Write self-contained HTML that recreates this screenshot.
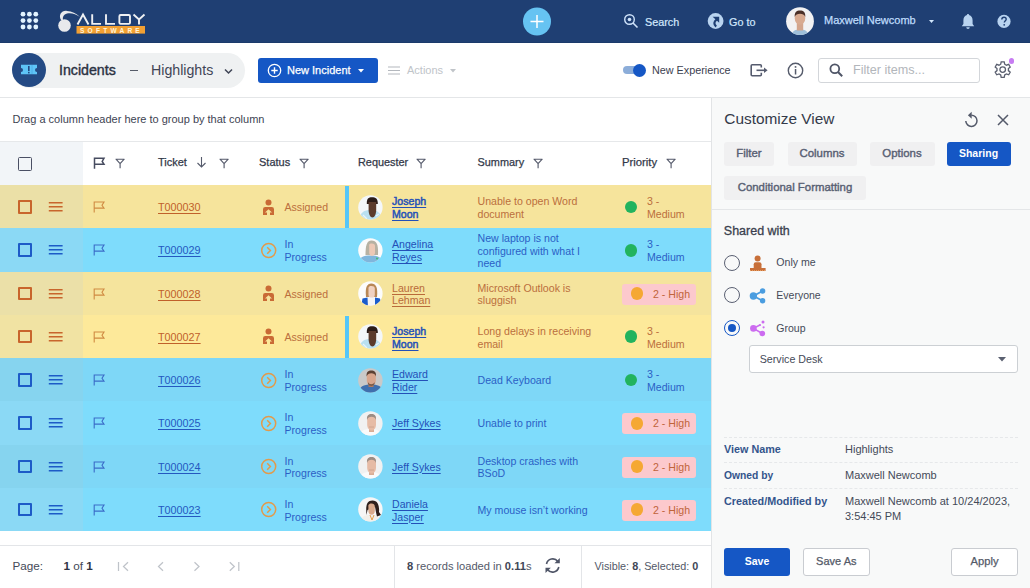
<!DOCTYPE html>
<html><head><meta charset="utf-8">
<style>
*{box-sizing:border-box;margin:0;padding:0}
html,body{width:1030px;height:588px;overflow:hidden;background:#fff;font-family:"Liberation Sans",sans-serif;color:#3a3f4e}
.a{position:absolute;white-space:nowrap}
svg{position:absolute;overflow:visible}
#hdr{z-index:2;position:absolute;left:0;top:0;width:1030px;height:43px;background:#1f3f73;border-bottom:1px solid #1b3a6b}
.ht{color:#d3e8fd;font-size:10.8px;line-height:14px;-webkit-text-stroke:0.2px #d3e8fd}
#tb{position:absolute;left:0;top:42px;width:1030px;height:56px;background:#fff;border-bottom:1px solid #e4e6e8}
#grid{position:absolute;left:0;top:98px;width:711px;height:490px;background:#fff}
.row{position:absolute;left:0;width:711px}
.lc{position:absolute;left:0;top:0;width:83px;height:100%}
.t{font-size:11px;line-height:13px}
.u{text-decoration:underline;text-decoration-thickness:1px;text-underline-offset:1.5px}
#panel{position:absolute;left:711px;top:98px;width:319px;height:490px;background:#f8f9f9;border-left:1px solid #e2e4e6}
.tab{position:absolute;height:24px;background:#f0f0f1;border-radius:3px;color:#586073;font-size:11.4px;line-height:22px;text-align:center;-webkit-text-stroke:0.4px #586073}
.lbl{color:#34558c;font-size:10.8px;font-weight:700;line-height:13px}
.val{color:#444a58;font-size:11px;line-height:13px}
.btn{position:absolute;height:28px;border-radius:3px;font-size:11.5px;line-height:24px;text-align:center}
</style></head><body>

<!-- HEADER -->
<div id="hdr">
  <svg width="40" height="40" style="left:0;top:0">
    <g fill="#e2f4ff">
      <circle cx="23" cy="14.2" r="2.4"/><circle cx="29.4" cy="14.2" r="2.4"/><circle cx="35.8" cy="14.2" r="2.4"/>
      <circle cx="23" cy="20.6" r="2.4"/><circle cx="29.4" cy="20.6" r="2.4"/><circle cx="35.8" cy="20.6" r="2.4"/>
      <circle cx="23" cy="27" r="2.4"/><circle cx="29.4" cy="27" r="2.4"/><circle cx="35.8" cy="27" r="2.4"/>
    </g>
  </svg>
  <!-- logo -->
  <svg width="100" height="40" style="left:50px;top:0">
    <circle cx="14.5" cy="25.5" r="6.3" fill="#e8e9ec"/>
    <path d="M11 20 C8 15 12 10 17 11 C22 11.5 26 13 30 17 C26 14 21 12.5 17 13.5 C13.5 14.5 12.5 17 13 20 Z" fill="#e8e9ec"/>
    <g fill="none" stroke="#eef0f3" stroke-width="1.9">
      <path d="M27.5 24.5 L33 14.5 L38.5 24.5"/>
      <path d="M42.2 14.3 V23.9 H51"/>
      <path d="M56 14.3 V23.9 H65"/>
      <rect x="69.4" y="15" width="10.6" height="8.9" rx="1.2"/>
      <path d="M83.5 14.5 L89 19.5 L94.5 14.5 M89 19.5 V24.5"/>
    </g>
    <rect x="26.5" y="26" width="68.5" height="7.6" fill="#f2a033"/>
    <text x="30" y="32.6" font-family="Liberation Sans" font-size="6.6" font-weight="700" fill="#fff3d8" letter-spacing="3.2">SOFTWARE</text>
  </svg>
  <svg width="30" height="30" style="left:522px;top:7px">
    <circle cx="15" cy="14.5" r="14" fill="#66c3f2"/>
    <path d="M8.5 14.5 H21.5 M15 8 V21" stroke="#fff" stroke-width="1.5"/>
  </svg>
  <svg width="16" height="16" style="left:623px;top:13px">
    <circle cx="6.5" cy="6.5" r="4.8" fill="none" stroke="#cfe3fb" stroke-width="1.4"/>
    <circle cx="6.5" cy="6.5" r="1.8" fill="#cfe3fb"/>
    <path d="M10 10 L14.5 14.5" stroke="#cfe3fb" stroke-width="1.6"/>
  </svg>
  <div class="a ht" style="left:645px;top:15px">Search</div>
  <svg width="18" height="18" style="left:707px;top:12px">
    <circle cx="8.6" cy="9" r="7.9" fill="#b9d4f0"/>
    <path d="M5.6 4.8 H12.2 V10.8 Z" fill="#1f3f73"/>
    <path d="M9.6 7.6 C6.8 9.6 6.6 12.4 9.2 14.6" fill="none" stroke="#1f3f73" stroke-width="2.2"/>
  </svg>
  <div class="a ht" style="left:729px;top:15px">Go to</div>
  <!-- avatar -->
  <svg width="30" height="30" style="left:785px;top:7px">
    <defs><clipPath id="avc"><circle cx="15" cy="14.2" r="13.9"/></clipPath></defs>
    <circle cx="15" cy="14.2" r="13.9" fill="#f2f2f3"/>
    <g clip-path="url(#avc)">
      <path d="M6 30 C7 24 10 22.5 15 22.5 C20 22.5 23 24 24 30 Z" fill="#9fbfd9"/>
      <rect x="11.8" y="15" width="6.4" height="8.5" fill="#d3a58c"/>
      <ellipse cx="15" cy="11" rx="5.3" ry="6.8" fill="#d8aa90"/>
      <path d="M9.7 10 C9.4 5 11.5 3.5 15 3.5 C18.5 3.5 20.6 5 20.3 10 C19.5 7.5 17.5 6.8 15 6.8 C12.5 6.8 10.5 7.5 9.7 10 Z" fill="#4a3028"/>
    </g>
  </svg>
  <div class="a ht" style="left:824px;top:12.5px;font-size:11px;color:#bfdcfb;-webkit-text-stroke:0.25px #bfdcfb">Maxwell Newcomb</div>
  <svg width="8" height="6" style="left:928.5px;top:20px"><path d="M0 0 H5 L2.5 3 Z" fill="#d3e8fd"/></svg>
  <svg width="16" height="18" style="left:960px;top:13px">
    <path d="M8 1 C8.8 1 9 1.5 9 2 C11.5 2.6 12.6 4.6 12.6 7.5 V11 L14.2 13.2 H1.8 L3.4 11 V7.5 C3.4 4.6 4.5 2.6 7 2 C7 1.5 7.2 1 8 1 Z" fill="#b8d3f0"/>
    <path d="M6.3 14.2 H9.7 C9.7 15.2 9 15.9 8 15.9 C7 15.9 6.3 15.2 6.3 14.2 Z" fill="#b8d3f0"/>
  </svg>
  <svg width="16" height="16" style="left:996px;top:13px">
    <circle cx="8" cy="8.4" r="6.6" fill="#b8d3f0"/>
    <path d="M5.8 6.4 C5.8 4.9 6.8 4.2 8 4.2 C9.3 4.2 10.2 5 10.2 6.2 C10.2 7.6 8.3 7.9 8.3 9.6" fill="none" stroke="#1f3e72" stroke-width="1.4"/>
    <circle cx="8.2" cy="11.8" r="0.9" fill="#1f3e72"/>
  </svg>
</div>

<!-- TOOLBAR -->
<div id="tb">
  <div class="a" style="left:12px;top:11px;width:233px;height:35px;border-radius:18px;background:#eff1f2"></div>
  <svg width="36" height="36" style="left:12px;top:11px">
    <circle cx="17" cy="17" r="17" fill="#244a84"/>
    <path d="M9 11.8 H25 V15 A2 2 0 0 0 25 19 V21.3 H9 V19 A2 2 0 0 0 9 15 Z" fill="#5ec4f7"/>
    <rect x="16" y="13" width="1.6" height="5.2" fill="#244a84"/>
    <rect x="16" y="19" width="1.6" height="1.4" fill="#244a84"/>
    <path d="M20 12.5 V21" stroke="#3b8fd0" stroke-width="0.8" stroke-dasharray="1 1"/>
  </svg>
  <div class="a" style="left:59px;top:20px;font-size:14.2px;line-height:16px;color:#2b3142;-webkit-text-stroke:0.4px #2b3142">Incidents</div>
  <div class="a" style="left:130px;top:27.5px;width:8px;height:1.3px;background:#555b68"></div>
  <div class="a" style="left:151px;top:20px;font-size:14.2px;line-height:16px;color:#3f4556">Highlights</div>
  <svg width="10" height="8" style="left:224px;top:26px"><path d="M1 1.5 L4.5 5 L8 1.5" fill="none" stroke="#3f4556" stroke-width="1.5"/></svg>

  <div class="a" style="left:257.5px;top:15.5px;width:120px;height:25px;border-radius:3px;background:#1557c5"></div>
  <svg width="16" height="16" style="left:267px;top:20.5px">
    <circle cx="7.5" cy="7.5" r="6.2" fill="none" stroke="#fff" stroke-width="1.3"/>
    <path d="M4.3 7.5 H10.7 M7.5 4.3 V10.7" stroke="#fff" stroke-width="1.4"/>
  </svg>
  <div class="a" style="left:287px;top:21.5px;font-size:11px;line-height:13px;color:#fff;-webkit-text-stroke:0.25px #fff">New Incident</div>
  <svg width="8" height="6" style="left:357.5px;top:26.5px"><path d="M0 0 H6 L3 3.5 Z" fill="#fff"/></svg>

  <svg width="14" height="10" style="left:387.5px;top:23.5px">
    <path d="M0 1 H12 M0 4.5 H12 M0 8 H12" stroke="#b4b8be" stroke-width="1.1"/>
  </svg>
  <div class="a" style="left:407px;top:21.5px;font-size:11px;line-height:13px;color:#c0c4c9">Actions</div>
  <svg width="8" height="6" style="left:449.5px;top:26.5px"><path d="M0 0 H6 L3 3.5 Z" fill="#c0c4c9"/></svg>

  <!-- toggle -->
  <div class="a" style="left:623px;top:24px;width:21px;height:8px;border-radius:4px;background:#8cadd9"></div>
  <div class="a" style="left:633px;top:22px;width:13px;height:13px;border-radius:50%;background:#1557c5"></div>
  <div class="a" style="left:652px;top:21.5px;font-size:10.8px;line-height:13px;color:#3c4150">New Experience</div>
  <svg width="20" height="16" style="left:749px;top:21px">
    <path d="M12.3 4.6 V2.8 Q12.3 1.8 11.3 1.8 H3.2 Q2.2 1.8 2.2 2.8 V11.8 Q2.2 12.8 3.2 12.8 H11.3 Q12.3 12.8 12.3 11.8 V9.8" fill="none" stroke="#555b6e" stroke-width="1.6"/>
    <path d="M7.5 7.3 H15.5" stroke="#555b6e" stroke-width="1.6"/><path d="M15 4.5 L18.6 7.3 L15 10.1 Z" fill="#555b6e"/>
  </svg>
  <svg width="18" height="18" style="left:787px;top:19.5px">
    <circle cx="8.5" cy="8.5" r="7.2" fill="none" stroke="#555b6b" stroke-width="1.4"/>
    <rect x="7.8" y="7" width="1.5" height="5.5" fill="#555b6b"/>
    <circle cx="8.55" cy="4.9" r="0.95" fill="#555b6b"/>
  </svg>
  <div class="a" style="left:818px;top:16px;width:162px;height:24.5px;border:1px solid #d3d6da;border-radius:3px;background:#fff"></div>
  <svg width="16" height="16" style="left:829px;top:21px">
    <circle cx="5.8" cy="5.8" r="4.4" fill="none" stroke="#4f5567" stroke-width="1.8"/>
    <path d="M9 9 L13.2 13.2" stroke="#4f5567" stroke-width="2"/>
  </svg>
  <div class="a" style="left:853px;top:20.5px;font-size:12.6px;line-height:15px;color:#b2b6bb">Filter items...</div>
  <svg width="20" height="20" style="left:993px;top:18px">
    <path fill="none" stroke="#5b6070" stroke-width="1.3" d="M8.2 1.8 H11.2 L11.7 4.2 L13.4 5.2 L15.7 4.4 L17.2 7 L15.4 8.6 V10.6 L17.2 12.2 L15.7 14.8 L13.4 14 L11.7 15 L11.2 17.4 H8.2 L7.7 15 L6 14 L3.7 14.8 L2.2 12.2 L4 10.6 V8.6 L2.2 7 L3.7 4.4 L6 5.2 L7.7 4.2 Z"/>
    <circle cx="9.7" cy="9.6" r="2.8" fill="none" stroke="#5b6070" stroke-width="1.3"/>
  </svg>
  <div class="a" style="left:1008.5px;top:16px;width:5.5px;height:5.5px;border-radius:3px;background:#c77cf2"></div>
</div>

<!-- GRID -->
<div id="grid">
  <div class="a t" style="left:12.5px;top:15px;font-size:11px;color:#3d4352">Drag a column header here to group by that column</div>
  <div class="a" style="left:0;top:43px;width:711px;height:1px;background:#e6e8ea"></div>
  <!-- header row -->
  <div class="a" style="left:0;top:44px;width:83px;height:43px;background:#f2f5f8"></div>
  <div class="a" style="left:18px;top:59px;width:14px;height:13.5px;border:1.8px solid #4a4f64;border-radius:1.5px"></div>
  <svg width="14" height="14" style="left:93px;top:59px">
    <path d="M1.5 11.8 V1.2 H11 L9.2 4.4 L11 7.3 H1.5" fill="none" stroke="#474c60" stroke-width="1.5"/>
  </svg>
  <svg id="fi" width="12" height="12" style="left:115px;top:60px">
    <path d="M1 1.2 H9.2 L5.1 5.6 Z M5.1 5.6 V10.2" fill="none" stroke="#555a6b" stroke-width="1.15" stroke-linejoin="round"/>
  </svg>
  <div class="a" style="left:158px;top:57px;font-size:11px;line-height:14px;color:#333949;-webkit-text-stroke:0.25px #333949">Ticket</div>
  <svg width="12" height="14" style="left:196px;top:58px">
    <path d="M5.5 1 V11 M1.5 7 L5.5 11 L9.5 7" fill="none" stroke="#555a6b" stroke-width="1.1"/>
  </svg>
  <svg width="12" height="12" style="left:219px;top:60px"><path d="M1 1.2 H9.2 L5.1 5.6 Z M5.1 5.6 V10.2" fill="none" stroke="#555a6b" stroke-width="1.15" stroke-linejoin="round"/></svg>
  <div class="a" style="left:259px;top:57px;font-size:11px;line-height:14px;color:#333949;-webkit-text-stroke:0.25px #333949">Status</div>
  <svg width="12" height="12" style="left:299px;top:60px"><path d="M1 1.2 H9.2 L5.1 5.6 Z M5.1 5.6 V10.2" fill="none" stroke="#555a6b" stroke-width="1.15" stroke-linejoin="round"/></svg>
  <div class="a" style="left:358px;top:57px;font-size:10.9px;line-height:14px;color:#333949;-webkit-text-stroke:0.25px #333949">Requester</div>
  <svg width="12" height="12" style="left:416px;top:60px"><path d="M1 1.2 H9.2 L5.1 5.6 Z M5.1 5.6 V10.2" fill="none" stroke="#555a6b" stroke-width="1.15" stroke-linejoin="round"/></svg>
  <div class="a" style="left:477.5px;top:57px;font-size:10.9px;line-height:14px;color:#333949;-webkit-text-stroke:0.25px #333949">Summary</div>
  <svg width="12" height="12" style="left:533px;top:60px"><path d="M1 1.2 H9.2 L5.1 5.6 Z M5.1 5.6 V10.2" fill="none" stroke="#555a6b" stroke-width="1.15" stroke-linejoin="round"/></svg>
  <div class="a" style="left:622px;top:57px;font-size:11.3px;line-height:14px;color:#333949;-webkit-text-stroke:0.25px #333949">Priority</div>
  <svg width="12" height="12" style="left:666px;top:60px"><path d="M1 1.2 H9.2 L5.1 5.6 Z M5.1 5.6 V10.2" fill="none" stroke="#555a6b" stroke-width="1.15" stroke-linejoin="round"/></svg>

  <div class="row" style="top:87.0px;height:43.25px;background:#f6e49c">
<div class="lc" style="background:#ebe0a7"></div>
<div class="a" style="left:18px;top:15px;width:14px;height:13.5px;border:2px solid #c8652c;border-radius:1px"></div>
<svg width="16" height="12" style="left:48px;top:16px"><path d="M0.8 1.8 H14.6 M0.8 5.8 H14.6 M0.8 9.7 H14.6" stroke="#c8652c" stroke-width="1.5"/></svg>
<svg width="14" height="14" style="left:93px;top:16px"><path d="M1.2 11.5 V1 H11 L9 4.2 L11 7.1 H1.2" fill="none" stroke="#d08a42" stroke-width="1.1"/></svg>
<div class="a t u" style="left:158px;top:16px;font-size:10.8px;color:#c0602a">T000030</div>
<svg width="14" height="18" style="left:262px;top:13.5px"><circle cx="6.5" cy="3.5" r="3" fill="#c96a35"/><path d="M1 16 V10.2 Q1 8 3.2 8 H9.8 Q12 8 12 10.2 V16 H8 V13.6 H10 L6.5 10.2 L3 13.6 H5 V16 Z" fill="#c96a35"/></svg>
<div class="a t" style="left:284.5px;top:16px;font-size:10.6px;color:#bb6f3d">Assigned</div>
<div class="a" style="left:345px;top:1px;width:4px;height:41.75px;background:#55c6f8"></div>
<svg width="26" height="26" style="left:357.8px;top:9.6px"><defs><clipPath id="cp0"><circle cx="12.4" cy="12.4" r="12.2"/></clipPath></defs><g clip-path="url(#cp0)"><rect width="26" height="26" fill="#f4f7f9"/><path d="M1 26 C2 17 6 15 12.5 15 C19 15 23 17 24 26 Z" fill="#b9e0f0"/><path d="M8.8 9 C8.5 3.5 10.5 2.2 14 2.2 C17.5 2.2 20 3.5 19.8 9 Z" fill="#2b1c18"/><path d="M10.6 7 H18.2 V15 C18.2 19 16.5 22.5 14.4 22.5 C12.3 22.5 10.6 19 10.6 15 Z" fill="#5b3b2c"/><path d="M5 20 L9 24 M18 21 L21 19" stroke="#e8f4fa" stroke-width="1.2"/></g></svg>
<div class="a t u" style="left:392px;top:10.2px;font-size:10.6px;line-height:12.6px;-webkit-text-stroke:0.45px #2350b8;color:#2350b8">Joseph<br>Moon</div>
<div class="a t" style="left:477.5px;top:10.2px;font-size:10.6px;line-height:12.6px;color:#bb6f3d">Unable to open Word<br>document</div>
<div class="a" style="left:624.7px;top:15.7px;width:12.6px;height:12.6px;border-radius:50%;background:#22b35e"></div>
<div class="a t" style="left:647px;top:10.2px;font-size:10.6px;line-height:12.6px;color:#bb6f3d">3 -<br>Medium</div>
</div>
<div class="row" style="top:130.25px;height:43.25px;background:#7edcfc">
<div class="lc" style="background:#8bd9f5"></div>
<div class="a" style="left:18px;top:15px;width:14px;height:13.5px;border:2px solid #1d5bc7;border-radius:1px"></div>
<svg width="16" height="12" style="left:48px;top:16px"><path d="M0.8 1.8 H14.6 M0.8 5.8 H14.6 M0.8 9.7 H14.6" stroke="#1d5bc7" stroke-width="1.5"/></svg>
<svg width="14" height="14" style="left:93px;top:16px"><path d="M1.2 11.5 V1 H11 L9 4.2 L11 7.1 H1.2" fill="none" stroke="#3b6cc8" stroke-width="1.1"/></svg>
<div class="a t u" style="left:158px;top:16px;font-size:10.8px;color:#2458c0">T000029</div>
<svg width="18" height="18" style="left:260px;top:13.5px"><circle cx="8.7" cy="8.5" r="7" fill="none" stroke="#e39a4a" stroke-width="1.5"/><path d="M7.2 5.2 L10.4 8.5 L7.2 11.8" fill="none" stroke="#e39a4a" stroke-width="1.5"/></svg>
<div class="a t" style="left:284.5px;top:10.2px;font-size:10.6px;line-height:12.6px;color:#2b5fc6">In<br>Progress</div>
<svg width="26" height="26" style="left:357.8px;top:9.6px"><defs><clipPath id="cp1"><circle cx="12.4" cy="12.4" r="12.2"/></clipPath></defs><g clip-path="url(#cp1)"><rect width="26" height="26" fill="#fbfbfb"/><path d="M0 26 C1 19 5 17.5 12.5 17.5 C20 17.5 24 19 25 26 Z" fill="#7fb6dc"/><circle cx="19" cy="20.5" r="1" fill="#3fbf6f"/><circle cx="21" cy="23" r="1" fill="#3fbf6f"/><path d="M7.5 17 C7.5 8 8.5 2.5 13.5 2.5 C18.5 2.5 20.5 6 20 17 Z" fill="#b7b1a2"/><path d="M11.2 7 C11.2 6 12 5.5 13.8 5.5 C16 5.5 17 6.5 17 8 V14.5 C17 16.8 15.6 18 14 18 C12.4 18 11.2 16.8 11.2 14.5 Z" fill="#edc9b6"/></g></svg>
<div class="a t u" style="left:392px;top:10.2px;font-size:10.6px;line-height:12.6px;color:#2350b8">Angelina<br>Reyes</div>
<div class="a t" style="left:477.5px;top:3.9px;font-size:10.6px;line-height:12.6px;color:#2b5fc6">New laptop is not<br>configured with what I<br>need</div>
<div class="a" style="left:624.7px;top:15.7px;width:12.6px;height:12.6px;border-radius:50%;background:#22b35e"></div>
<div class="a t" style="left:647px;top:10.2px;font-size:10.6px;line-height:12.6px;color:#2b5fc6">3 -<br>Medium</div>
</div>
<div class="row" style="top:173.5px;height:43.25px;background:#f5e49d">
<div class="lc" style="background:#ebe0a8"></div>
<div class="a" style="left:18px;top:15px;width:14px;height:13.5px;border:2px solid #c8652c;border-radius:1px"></div>
<svg width="16" height="12" style="left:48px;top:16px"><path d="M0.8 1.8 H14.6 M0.8 5.8 H14.6 M0.8 9.7 H14.6" stroke="#c8652c" stroke-width="1.5"/></svg>
<svg width="14" height="14" style="left:93px;top:16px"><path d="M1.2 11.5 V1 H11 L9 4.2 L11 7.1 H1.2" fill="none" stroke="#d08a42" stroke-width="1.1"/></svg>
<div class="a t u" style="left:158px;top:16px;font-size:10.8px;color:#c0602a">T000028</div>
<svg width="14" height="18" style="left:262px;top:13.5px"><circle cx="6.5" cy="3.5" r="3" fill="#c96a35"/><path d="M1 16 V10.2 Q1 8 3.2 8 H9.8 Q12 8 12 10.2 V16 H8 V13.6 H10 L6.5 10.2 L3 13.6 H5 V16 Z" fill="#c96a35"/></svg>
<div class="a t" style="left:284.5px;top:16px;font-size:10.6px;color:#bb6f3d">Assigned</div>
<svg width="26" height="26" style="left:357.8px;top:9.6px"><defs><clipPath id="cp2"><circle cx="12.4" cy="12.4" r="12.2"/></clipPath></defs><g clip-path="url(#cp2)"><rect width="26" height="26" fill="#fcfcfc"/><path d="M8 16 C7 6 9 2.5 13.3 2.5 C17.8 2.5 20 6 19 16 Z" fill="#b98856"/><path d="M10.5 7 C10.5 5.5 11.8 5 13.5 5 C15.5 5 16.8 5.8 16.8 7.5 V13.5 C16.8 16 15.3 17.3 13.6 17.3 C11.9 17.3 10.5 16 10.5 13.5 Z" fill="#f1d2c2"/><path d="M4 26 C4 19 7 16.5 13 16.5 C19 16.5 22 19 22.5 26 Z" fill="#f4f4f6"/><path d="M3 26 L4.5 17.5 L9.5 16.5 L10 26 Z M17 16.5 L22 17.5 L24 26 H17 Z" fill="#1a5ccc"/></g></svg>
<div class="a t u" style="left:392px;top:10.2px;font-size:10.6px;line-height:12.6px;color:#b96a3a">Lauren<br>Lehman</div>
<div class="a t" style="left:477.5px;top:10.2px;font-size:10.6px;line-height:12.6px;color:#bb6f3d">Microsoft Outlook is<br>sluggish</div>
<div class="a" style="left:622px;top:12px;width:74px;height:21px;border-radius:3px;background:#fcc9cd"></div>
<div class="a" style="left:630.7px;top:15.7px;width:12.6px;height:12.6px;border-radius:50%;background:#f5a833"></div>
<div class="a t" style="left:653px;top:16px;font-size:10.6px;color:#c0643a">2 - High</div>
</div>
<div class="row" style="top:216.75px;height:43.25px;background:#fde99a">
<div class="lc" style="background:#f1e3a3"></div>
<div class="a" style="left:18px;top:15px;width:14px;height:13.5px;border:2px solid #c8652c;border-radius:1px"></div>
<svg width="16" height="12" style="left:48px;top:16px"><path d="M0.8 1.8 H14.6 M0.8 5.8 H14.6 M0.8 9.7 H14.6" stroke="#c8652c" stroke-width="1.5"/></svg>
<svg width="14" height="14" style="left:93px;top:16px"><path d="M1.2 11.5 V1 H11 L9 4.2 L11 7.1 H1.2" fill="none" stroke="#d08a42" stroke-width="1.1"/></svg>
<div class="a t u" style="left:158px;top:16px;font-size:10.8px;color:#c0602a">T000027</div>
<svg width="14" height="18" style="left:262px;top:13.5px"><circle cx="6.5" cy="3.5" r="3" fill="#c96a35"/><path d="M1 16 V10.2 Q1 8 3.2 8 H9.8 Q12 8 12 10.2 V16 H8 V13.6 H10 L6.5 10.2 L3 13.6 H5 V16 Z" fill="#c96a35"/></svg>
<div class="a t" style="left:284.5px;top:16px;font-size:10.6px;color:#bb6f3d">Assigned</div>
<div class="a" style="left:345px;top:1px;width:4px;height:41.75px;background:#55c6f8"></div>
<svg width="26" height="26" style="left:357.8px;top:9.6px"><defs><clipPath id="cp3"><circle cx="12.4" cy="12.4" r="12.2"/></clipPath></defs><g clip-path="url(#cp3)"><rect width="26" height="26" fill="#f4f7f9"/><path d="M1 26 C2 17 6 15 12.5 15 C19 15 23 17 24 26 Z" fill="#b9e0f0"/><path d="M8.8 9 C8.5 3.5 10.5 2.2 14 2.2 C17.5 2.2 20 3.5 19.8 9 Z" fill="#2b1c18"/><path d="M10.6 7 H18.2 V15 C18.2 19 16.5 22.5 14.4 22.5 C12.3 22.5 10.6 19 10.6 15 Z" fill="#5b3b2c"/><path d="M5 20 L9 24 M18 21 L21 19" stroke="#e8f4fa" stroke-width="1.2"/></g></svg>
<div class="a t u" style="left:392px;top:10.2px;font-size:10.6px;line-height:12.6px;-webkit-text-stroke:0.45px #2350b8;color:#2350b8">Joseph<br>Moon</div>
<div class="a t" style="left:477.5px;top:10.2px;font-size:10.6px;line-height:12.6px;color:#bb6f3d">Long delays in receiving<br>email</div>
<div class="a" style="left:624.7px;top:15.7px;width:12.6px;height:12.6px;border-radius:50%;background:#22b35e"></div>
<div class="a t" style="left:647px;top:10.2px;font-size:10.6px;line-height:12.6px;color:#bb6f3d">3 -<br>Medium</div>
</div>
<div class="row" style="top:260.0px;height:43.25px;background:#7ed7f7">
<div class="lc" style="background:#86d4ef"></div>
<div class="a" style="left:18px;top:15px;width:14px;height:13.5px;border:2px solid #1d5bc7;border-radius:1px"></div>
<svg width="16" height="12" style="left:48px;top:16px"><path d="M0.8 1.8 H14.6 M0.8 5.8 H14.6 M0.8 9.7 H14.6" stroke="#1d5bc7" stroke-width="1.5"/></svg>
<svg width="14" height="14" style="left:93px;top:16px"><path d="M1.2 11.5 V1 H11 L9 4.2 L11 7.1 H1.2" fill="none" stroke="#3b6cc8" stroke-width="1.1"/></svg>
<div class="a t u" style="left:158px;top:16px;font-size:10.8px;color:#2458c0">T000026</div>
<svg width="18" height="18" style="left:260px;top:13.5px"><circle cx="8.7" cy="8.5" r="7" fill="none" stroke="#e39a4a" stroke-width="1.5"/><path d="M7.2 5.2 L10.4 8.5 L7.2 11.8" fill="none" stroke="#e39a4a" stroke-width="1.5"/></svg>
<div class="a t" style="left:284.5px;top:10.2px;font-size:10.6px;line-height:12.6px;color:#2b5fc6">In<br>Progress</div>
<svg width="26" height="26" style="left:357.8px;top:9.6px"><defs><clipPath id="cp4"><circle cx="12.4" cy="12.4" r="12.2"/></clipPath></defs><g clip-path="url(#cp4)"><rect width="26" height="26" fill="#c9c9c9"/><path d="M0 26 C1 18.5 5 16.5 13 16.5 C21 16.5 25 18.5 26 26 Z" fill="#3f6fae"/><path d="M10.5 13 H15.5 V19 H10.5 Z" fill="#b07a60"/><path d="M8.8 7 C8.8 4 10.5 3 13.3 3 C16 3 17.8 4 17.8 7 V12.5 C17.8 15.5 15.8 17.5 13.3 17.5 C10.8 17.5 8.8 15.5 8.8 12.5 Z" fill="#d8a58c"/><path d="M8.6 8.5 C8.3 3.8 10.2 2.5 13.3 2.5 C16.4 2.5 18.3 3.8 18 8.5 C17.2 6 15.5 5.2 13.3 5.2 C11.1 5.2 9.4 6 8.6 8.5 Z" fill="#5a4033"/><path d="M10 14 C11 17 15.5 17 16.5 14 V16 C15.5 18.5 11 18.5 10 16 Z" fill="#7a5a48"/></g></svg>
<div class="a t u" style="left:392px;top:10.2px;font-size:10.6px;line-height:12.6px;color:#2350b8">Edward<br>Rider</div>
<div class="a t" style="left:477.5px;top:16px;font-size:10.6px;line-height:12.6px;color:#2b5fc6">Dead Keyboard</div>
<div class="a" style="left:624.7px;top:15.7px;width:12.6px;height:12.6px;border-radius:50%;background:#22b35e"></div>
<div class="a t" style="left:647px;top:10.2px;font-size:10.6px;line-height:12.6px;color:#2b5fc6">3 -<br>Medium</div>
</div>
<div class="row" style="top:303.25px;height:43.25px;background:#7edcfc">
<div class="lc" style="background:#8bd9f5"></div>
<div class="a" style="left:18px;top:15px;width:14px;height:13.5px;border:2px solid #1d5bc7;border-radius:1px"></div>
<svg width="16" height="12" style="left:48px;top:16px"><path d="M0.8 1.8 H14.6 M0.8 5.8 H14.6 M0.8 9.7 H14.6" stroke="#1d5bc7" stroke-width="1.5"/></svg>
<svg width="14" height="14" style="left:93px;top:16px"><path d="M1.2 11.5 V1 H11 L9 4.2 L11 7.1 H1.2" fill="none" stroke="#3b6cc8" stroke-width="1.1"/></svg>
<div class="a t u" style="left:158px;top:16px;font-size:10.8px;color:#2458c0">T000025</div>
<svg width="18" height="18" style="left:260px;top:13.5px"><circle cx="8.7" cy="8.5" r="7" fill="none" stroke="#e39a4a" stroke-width="1.5"/><path d="M7.2 5.2 L10.4 8.5 L7.2 11.8" fill="none" stroke="#e39a4a" stroke-width="1.5"/></svg>
<div class="a t" style="left:284.5px;top:10.2px;font-size:10.6px;line-height:12.6px;color:#2b5fc6">In<br>Progress</div>
<svg width="26" height="26" style="left:357.8px;top:9.6px"><defs><clipPath id="cp5"><circle cx="12.4" cy="12.4" r="12.2"/></clipPath></defs><g clip-path="url(#cp5)"><rect width="26" height="26" fill="#f1f1f1"/><path d="M1 26 C2 19.5 6 18 12.5 18 C19 18 23 19.5 24 26 Z" fill="#fafafa"/><path d="M11 14 H16 V21 H11 Z" fill="#d9ad95"/><path d="M9.2 7.5 C9.2 4.5 11 3.5 13.5 3.5 C16 3.5 18 4.5 18 7.5 V13.5 C18 17 16 19.5 13.6 19.5 C11.2 19.5 9.2 17 9.2 13.5 Z" fill="#e6bba5"/><path d="M9 9 C8.7 4.2 10.6 3 13.5 3 C16.4 3 18.3 4.2 18 9 C17.3 6.5 15.8 5.8 13.5 5.8 C11.2 5.8 9.7 6.5 9 9 Z" fill="#9b8c84"/><path d="M11 16 H16" stroke="#c9a08a" stroke-width="0.8"/></g></svg>
<div class="a t u" style="left:392px;top:16px;font-size:10.6px;color:#2350b8">Jeff Sykes</div>
<div class="a t" style="left:477.5px;top:16px;font-size:10.6px;line-height:12.6px;color:#2b5fc6">Unable to print</div>
<div class="a" style="left:622px;top:12px;width:74px;height:21px;border-radius:3px;background:#fcc9cd"></div>
<div class="a" style="left:630.7px;top:15.7px;width:12.6px;height:12.6px;border-radius:50%;background:#f5a833"></div>
<div class="a t" style="left:653px;top:16px;font-size:10.6px;color:#c0643a">2 - High</div>
</div>
<div class="row" style="top:346.5px;height:43.25px;background:#7ed7f7">
<div class="lc" style="background:#86d4ef"></div>
<div class="a" style="left:18px;top:15px;width:14px;height:13.5px;border:2px solid #1d5bc7;border-radius:1px"></div>
<svg width="16" height="12" style="left:48px;top:16px"><path d="M0.8 1.8 H14.6 M0.8 5.8 H14.6 M0.8 9.7 H14.6" stroke="#1d5bc7" stroke-width="1.5"/></svg>
<svg width="14" height="14" style="left:93px;top:16px"><path d="M1.2 11.5 V1 H11 L9 4.2 L11 7.1 H1.2" fill="none" stroke="#3b6cc8" stroke-width="1.1"/></svg>
<div class="a t u" style="left:158px;top:16px;font-size:10.8px;color:#2458c0">T000024</div>
<svg width="18" height="18" style="left:260px;top:13.5px"><circle cx="8.7" cy="8.5" r="7" fill="none" stroke="#e39a4a" stroke-width="1.5"/><path d="M7.2 5.2 L10.4 8.5 L7.2 11.8" fill="none" stroke="#e39a4a" stroke-width="1.5"/></svg>
<div class="a t" style="left:284.5px;top:10.2px;font-size:10.6px;line-height:12.6px;color:#2b5fc6">In<br>Progress</div>
<svg width="26" height="26" style="left:357.8px;top:9.6px"><defs><clipPath id="cp6"><circle cx="12.4" cy="12.4" r="12.2"/></clipPath></defs><g clip-path="url(#cp6)"><rect width="26" height="26" fill="#f1f1f1"/><path d="M1 26 C2 19.5 6 18 12.5 18 C19 18 23 19.5 24 26 Z" fill="#fafafa"/><path d="M11 14 H16 V21 H11 Z" fill="#d9ad95"/><path d="M9.2 7.5 C9.2 4.5 11 3.5 13.5 3.5 C16 3.5 18 4.5 18 7.5 V13.5 C18 17 16 19.5 13.6 19.5 C11.2 19.5 9.2 17 9.2 13.5 Z" fill="#e6bba5"/><path d="M9 9 C8.7 4.2 10.6 3 13.5 3 C16.4 3 18.3 4.2 18 9 C17.3 6.5 15.8 5.8 13.5 5.8 C11.2 5.8 9.7 6.5 9 9 Z" fill="#9b8c84"/><path d="M11 16 H16" stroke="#c9a08a" stroke-width="0.8"/></g></svg>
<div class="a t u" style="left:392px;top:16px;font-size:10.6px;color:#2350b8">Jeff Sykes</div>
<div class="a t" style="left:477.5px;top:10.2px;font-size:10.6px;line-height:12.6px;color:#2b5fc6">Desktop crashes with<br>BSoD</div>
<div class="a" style="left:622px;top:12px;width:74px;height:21px;border-radius:3px;background:#fcc9cd"></div>
<div class="a" style="left:630.7px;top:15.7px;width:12.6px;height:12.6px;border-radius:50%;background:#f5a833"></div>
<div class="a t" style="left:653px;top:16px;font-size:10.6px;color:#c0643a">2 - High</div>
</div>
<div class="row" style="top:389.75px;height:43.25px;background:#7edcfc">
<div class="lc" style="background:#8bd9f5"></div>
<div class="a" style="left:18px;top:15px;width:14px;height:13.5px;border:2px solid #1d5bc7;border-radius:1px"></div>
<svg width="16" height="12" style="left:48px;top:16px"><path d="M0.8 1.8 H14.6 M0.8 5.8 H14.6 M0.8 9.7 H14.6" stroke="#1d5bc7" stroke-width="1.5"/></svg>
<svg width="14" height="14" style="left:93px;top:16px"><path d="M1.2 11.5 V1 H11 L9 4.2 L11 7.1 H1.2" fill="none" stroke="#3b6cc8" stroke-width="1.1"/></svg>
<div class="a t u" style="left:158px;top:16px;font-size:10.8px;color:#2458c0">T000023</div>
<svg width="18" height="18" style="left:260px;top:13.5px"><circle cx="8.7" cy="8.5" r="7" fill="none" stroke="#e39a4a" stroke-width="1.5"/><path d="M7.2 5.2 L10.4 8.5 L7.2 11.8" fill="none" stroke="#e39a4a" stroke-width="1.5"/></svg>
<div class="a t" style="left:284.5px;top:10.2px;font-size:10.6px;line-height:12.6px;color:#2b5fc6">In<br>Progress</div>
<svg width="26" height="26" style="left:357.8px;top:9.6px"><defs><clipPath id="cp7"><circle cx="12.4" cy="12.4" r="12.2"/></clipPath></defs><g clip-path="url(#cp7)"><rect width="26" height="26" fill="#f6f6f6"/><path d="M2 26 C3 20 6 18 12.5 18 C19 18 22 20 23 26 Z" fill="#f2efea"/><path d="M8.5 18 C7.5 8 9 3.5 14.5 3.5 C20 3.5 21.5 9 21 15 L23 18 L19 19.5 C18 16 17.5 12 17 10 L9.5 13 Z" fill="#2e201c"/><path d="M10.4 8.5 C10.8 7 12 6.5 13.5 6.5 C15.5 6.5 16.8 7.5 16.8 9.5 V14 C16.8 16.3 15.4 17.8 13.6 17.8 C11.8 17.8 10.4 16.3 10.4 14 Z" fill="#d9aa8c"/><path d="M12 18 L14 23 L16 18" fill="none" stroke="#e0963a" stroke-width="0.9"/></g></svg>
<div class="a t u" style="left:392px;top:10.2px;font-size:10.6px;line-height:12.6px;color:#2350b8">Daniela<br>Jasper</div>
<div class="a t" style="left:477.5px;top:16px;font-size:10.6px;line-height:12.6px;color:#2b5fc6">My mouse isn’t working</div>
<div class="a" style="left:622px;top:12px;width:74px;height:21px;border-radius:3px;background:#fcc9cd"></div>
<div class="a" style="left:630.7px;top:15.7px;width:12.6px;height:12.6px;border-radius:50%;background:#f5a833"></div>
<div class="a t" style="left:653px;top:16px;font-size:10.6px;color:#c0643a">2 - High</div>
</div>

  <!-- footer -->
  <div class="a" style="left:0;top:447px;width:711px;height:1px;background:#e3e5e8"></div>
  <div class="a" style="left:12.5px;top:460.5px;font-size:11.7px;line-height:14px;color:#444a58">Page:</div>
  <div class="a" style="left:63.5px;top:460.5px;font-size:11.7px;line-height:14px;color:#444a58"><b style="color:#2f3444">1</b> of <b style="color:#2f3444">1</b></div>
  <svg width="130" height="14" style="left:117px;top:463px">
    <g fill="none" stroke="#bfc3c9" stroke-width="1.25">
      <path d="M1.5 1 V10"/><path d="M11 1.2 L6.5 5.5 L11 9.8"/>
      <path d="M46 1.2 L41.5 5.5 L46 9.8"/>
      <path d="M77.5 1.2 L82 5.5 L77.5 9.8"/>
      <path d="M112.8 1.2 L117.3 5.5 L112.8 9.8"/><path d="M121.8 1 V10"/>
    </g>
  </svg>
  <div class="a" style="left:394px;top:448px;width:1px;height:42px;background:#e3e5e8"></div>
  <div class="a" style="left:407px;top:461px;font-size:11.15px;line-height:14px;color:#535968"><b style="color:#414656">8</b> records loaded in <b style="color:#414656">0.11</b>s</div>
  <svg width="18" height="18" style="left:544px;top:458.5px">
    <g fill="none" stroke="#4f5567" stroke-width="1.6">
      <path d="M2.5 7 A6.3 6.3 0 0 1 13.8 4.5"/><path d="M14.8 10 A6.3 6.3 0 0 1 3.5 12.5"/>
    </g>
    <path d="M15.8 1 V6.3 H10.5 Z" fill="#4f5567"/><path d="M1.5 16 V10.7 H6.8 Z" fill="#4f5567"/>
  </svg>
  <div class="a" style="left:581px;top:448px;width:1px;height:42px;background:#e3e5e8"></div>
  <div class="a" style="left:594.5px;top:461px;font-size:10.8px;line-height:14px;color:#535968">Visible: <b style="color:#414656">8</b>, Selected: <b style="color:#414656">0</b></div>
</div>

<!-- PANEL -->
<div id="panel">
  <div class="a" style="left:12.3px;top:12px;font-size:15.4px;line-height:18px;color:#343a4a">Customize View</div>
  <svg width="16" height="16" style="left:253px;top:13px">
    <path d="M0.8 10 A5.6 5.6 0 1 0 6.4 4.2" fill="none" stroke="#545a6a" stroke-width="1.5"/>
    <path d="M2.9 4.2 L6.7 0.7 V7.7 Z" fill="#545a6a"/>
  </svg>
  <svg width="14" height="14" style="left:285px;top:16px">
    <path d="M1 1 L11 11 M11 1 L1 11" stroke="#545a6a" stroke-width="1.5"/>
  </svg>
  <div class="tab" style="left:12px;top:44px;width:50px">Filter</div>
  <div class="tab" style="left:75.5px;top:44px;width:69px">Columns</div>
  <div class="tab" style="left:157.5px;top:44px;width:65px">Options</div>
  <div class="tab" style="left:234.5px;top:44px;width:64px;background:#1557c5;color:#fff;font-weight:700;font-size:10.5px;-webkit-text-stroke:0">Sharing</div>
  <div class="tab" style="left:12px;top:77.5px;width:142px">Conditional Formatting</div>
  <div class="a" style="left:0;top:110.5px;width:319px;height:1px;background:#e4e6e8"></div>

  <div class="a" style="left:11.8px;top:126px;font-size:12.5px;line-height:15px;color:#3a3f4e;-webkit-text-stroke:0.3px #3a3f4e">Shared with</div>
  <!-- radios -->
  <div class="a" style="left:11.8px;top:157px;width:16px;height:16px;border:1.6px solid #5b6173;border-radius:50%"></div>
  <div class="a" style="left:11.8px;top:189px;width:16px;height:16px;border:1.6px solid #5b6173;border-radius:50%"></div>
  <div class="a" style="left:11.8px;top:222px;width:16px;height:16px;border:1.6px solid #1557c5;border-radius:50%"></div>
  <div class="a" style="left:15.8px;top:226px;width:8px;height:8px;border-radius:50%;background:#1557c5"></div>
  <svg width="18" height="18" style="left:38px;top:156px">
    <circle cx="7.6" cy="4.4" r="3" fill="#c8703a"/>
    <path d="M3.7 14.2 V10.3 Q3.7 8.3 5.7 8.3 H9.5 Q11.5 8.3 11.5 10.3 V14.2 Z" fill="#c8703a"/>
    <rect x="0" y="14" width="15.6" height="3" fill="#c8703a"/>
    <path d="M0 16.6 H15.6" stroke="#f0b070" stroke-width="0.8" stroke-dasharray="1 1"/>
  </svg>
  <svg width="18" height="18" style="left:38px;top:187px">
    <g fill="#4a9de0"><circle cx="12.6" cy="6" r="2.7"/><circle cx="3.4" cy="11" r="3.7"/><circle cx="12.6" cy="15.8" r="2.7"/></g>
    <path d="M12.6 6 L3.4 11 L12.6 15.8" stroke="#4a9de0" stroke-width="1.8" fill="none"/>
  </svg>
  <svg width="18" height="18" style="left:38px;top:220px">
    <g fill="#cc6cf0"><circle cx="3.4" cy="10.4" r="3.3"/><circle cx="12.3" cy="15.5" r="2.8"/><circle cx="13" cy="4" r="1.5"/><circle cx="10" cy="7" r="1.1"/><circle cx="13.6" cy="9.3" r="1.1"/></g>
    <path d="M10 7 L3.4 10.4 L12.3 15.5" stroke="#cc6cf0" stroke-width="1.6" fill="none"/>
  </svg>
  <div class="a val" style="left:64.3px;top:158px;font-size:10.6px">Only me</div>
  <div class="a val" style="left:64.3px;top:190.5px;font-size:10.5px">Everyone</div>
  <div class="a val" style="left:64.3px;top:223.5px;font-size:10.5px">Group</div>
  <div class="a" style="left:37.3px;top:247.3px;width:269px;height:28px;border:1px solid #ccd0d4;border-radius:3px;background:#fff"></div>
  <div class="a val" style="left:47.7px;top:254.5px;font-size:10.7px;color:#444a58">Service Desk</div>
  <svg width="10" height="6" style="left:285.5px;top:259px"><path d="M0 0 H8 L4 4.5 Z" fill="#5a6070"/></svg>

  <!-- info -->
  <div class="a" style="left:12px;top:339px;width:294px;border-top:1px dashed #e6e8ea"></div>
  <div class="a" style="left:12px;top:364px;width:294px;border-top:1px dashed #e6e8ea"></div>
  <div class="a" style="left:12px;top:389.5px;width:294px;border-top:1px dashed #e6e8ea"></div>
  <div class="a lbl" style="left:12px;top:345px">View Name</div>
  <div class="a val" style="left:133px;top:345px">Highlights</div>
  <div class="a lbl" style="left:12px;top:371px;font-size:10.3px">Owned by</div>
  <div class="a val" style="left:133px;top:371px">Maxwell Newcomb</div>
  <div class="a lbl" style="left:12px;top:397px">Created/Modified by</div>
  <div class="a val" style="left:133px;top:397px">Maxwell Newcomb at 10/24/2023,</div>
  <div class="a val" style="left:133px;top:412px">3:54:45 PM</div>

  <div class="btn" style="left:12px;top:449.5px;width:66px;background:#1557c5;color:#fff;font-weight:700;font-size:10.5px;line-height:26px">Save</div>
  <div class="btn" style="left:90.8px;top:449.5px;width:67px;border:1px solid #c9ccd1;background:#fff;color:#545a68;-webkit-text-stroke:0.25px #545a68;font-size:11px">Save As</div>
  <div class="btn" style="left:239px;top:449.5px;width:67px;border:1px solid #c9ccd1;background:#fff;color:#545a68;-webkit-text-stroke:0.25px #545a68;font-size:11.2px">Apply</div>
</div>

</body></html>
